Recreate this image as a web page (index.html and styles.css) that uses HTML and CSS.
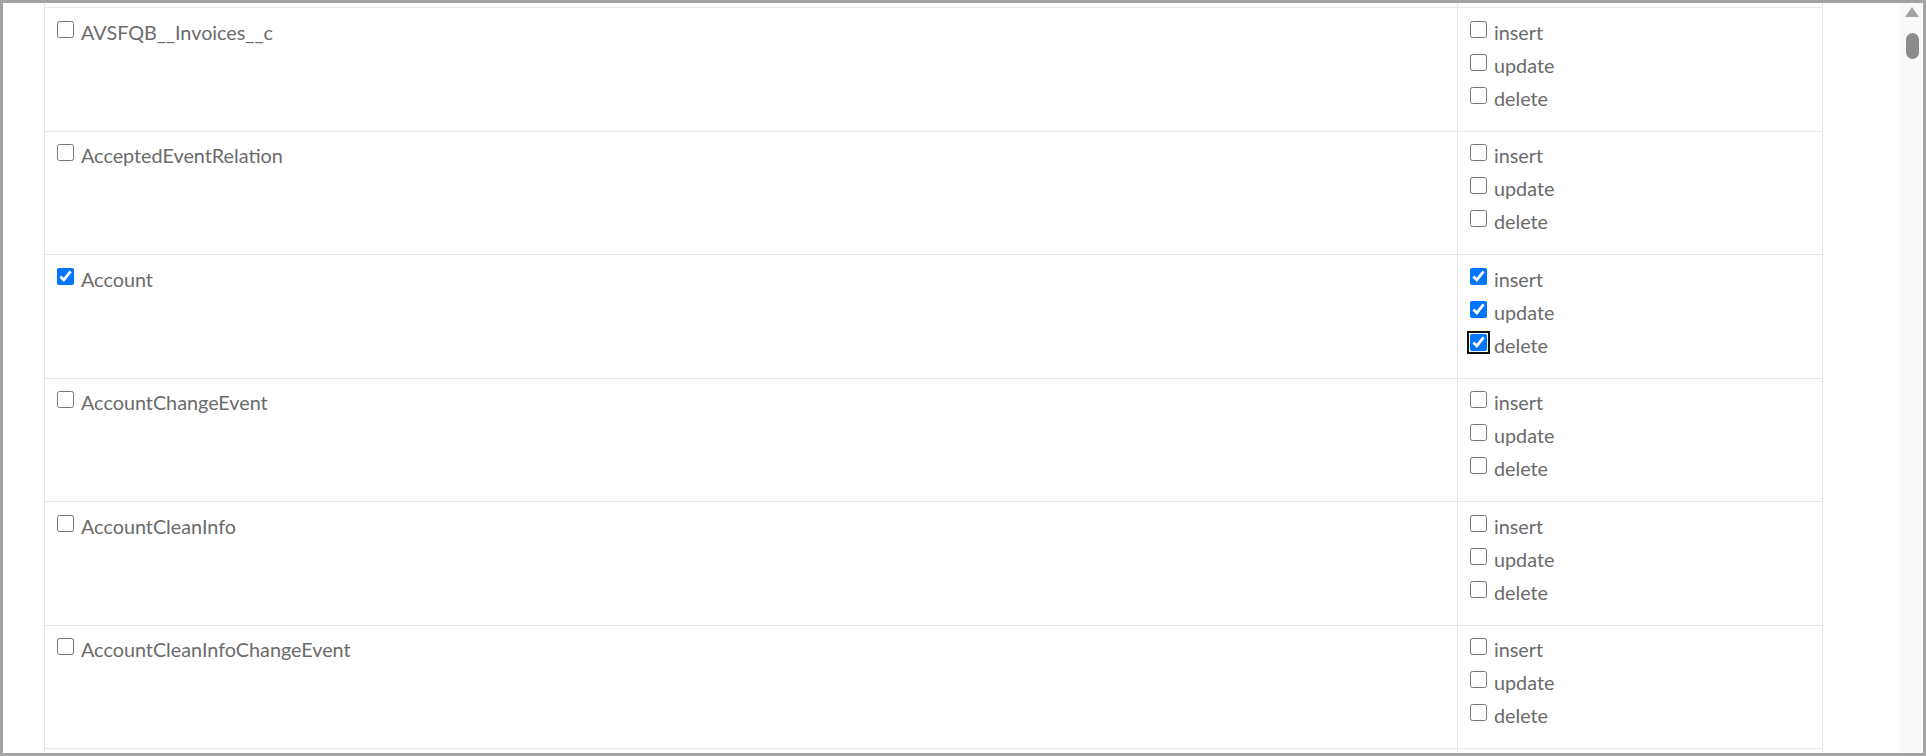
FILE: index.html
```html
<!DOCTYPE html>
<html>
<head>
<meta charset="utf-8">
<link rel="stylesheet" href="styles.css">
</head>
<body>
<div class="frame">
  <div class="viewport">
    <div class="table">
      <div class="cell name stub"></div><div class="cell ops stub"></div>

      <div class="cell name"><label class="opt"><input type="checkbox"><span>AVSFQB__Invoices__c</span></label></div>
      <div class="cell ops">
        <label class="opt"><input type="checkbox"><span>insert</span></label>
        <label class="opt"><input type="checkbox"><span>update</span></label>
        <label class="opt"><input type="checkbox"><span>delete</span></label>
      </div>

      <div class="cell name"><label class="opt"><input type="checkbox"><span>AcceptedEventRelation</span></label></div>
      <div class="cell ops">
        <label class="opt"><input type="checkbox"><span>insert</span></label>
        <label class="opt"><input type="checkbox"><span>update</span></label>
        <label class="opt"><input type="checkbox"><span>delete</span></label>
      </div>

      <div class="cell name"><label class="opt"><input type="checkbox" checked><span>Account</span></label></div>
      <div class="cell ops">
        <label class="opt"><input type="checkbox" checked><span>insert</span></label>
        <label class="opt"><input type="checkbox" checked><span>update</span></label>
        <label class="opt"><input type="checkbox" class="focused" checked><span>delete</span></label>
      </div>

      <div class="cell name"><label class="opt"><input type="checkbox"><span>AccountChangeEvent</span></label></div>
      <div class="cell ops">
        <label class="opt"><input type="checkbox"><span>insert</span></label>
        <label class="opt"><input type="checkbox"><span>update</span></label>
        <label class="opt"><input type="checkbox"><span>delete</span></label>
      </div>

      <div class="cell name"><label class="opt"><input type="checkbox"><span>AccountCleanInfo</span></label></div>
      <div class="cell ops">
        <label class="opt"><input type="checkbox"><span>insert</span></label>
        <label class="opt"><input type="checkbox"><span>update</span></label>
        <label class="opt"><input type="checkbox"><span>delete</span></label>
      </div>

      <div class="cell name"><label class="opt"><input type="checkbox"><span>AccountCleanInfoChangeEvent</span></label></div>
      <div class="cell ops">
        <label class="opt"><input type="checkbox"><span>insert</span></label>
        <label class="opt"><input type="checkbox"><span>update</span></label>
        <label class="opt"><input type="checkbox"><span>delete</span></label>
      </div>

      <div class="cell name"></div>
      <div class="cell ops"></div>
    </div>
  </div>
  <div class="scrollbar">
    <svg class="arrow" width="14" height="10" viewBox="0 0 14 10"><polygon points="7,0 14,10 0,10" fill="#a3a3a3"/></svg>
    <div class="thumb"></div>
  </div>
</div>
</body>
</html>
```

FILE: styles.css
```css
html, body {
  margin: 0;
  padding: 0;
  background: #ffffff;
}

.frame {
  width: 1926px;
  height: 756px;
  box-sizing: border-box;
  border: 3px solid #a3a3a3;
  display: flex;
  overflow: hidden;
  font-family: Lato, "Open Sans", sans-serif;
  font-size: 19.8px;
  color: #6b6b6b;
}

.viewport {
  flex: 1;
  overflow: hidden;
  padding-left: 41px;
}

.table {
  width: 1779px;
  display: grid;
  grid-template-columns: 1413px 366px;
  grid-template-rows: 4px;
  grid-auto-rows: 123.5px;
}

.cell {
  box-sizing: border-box;
  border-top: 1px solid #e4e7ea;
  border-left: 1px solid #e4e7ea;
  padding: 12.7px 0 0 12px;
}

.cell.ops {
  border-right: 1px solid #e4e7ea;
}

.cell.stub {
  height: 4px;
  border-top: none;
  padding: 0;
}

.opt {
  display: flex;
  align-items: flex-start;
  gap: 7px;
  height: 33px;
  line-height: 23.5px;
  white-space: nowrap;
}

.opt input {
  width: 17px;
  height: 17px;
  margin: 0;
  flex: none;
  accent-color: #0075ff;
}

.opt input.focused {
  outline: 2.7px solid #111111;
  outline-offset: 1.2px;
  border-radius: 3px;
}

.scrollbar {
  width: 23px;
  flex: none;
  background: #fafafa;
  display: flex;
  flex-direction: column;
  align-items: center;
}

.arrow {
  margin-top: 4px;
  margin-left: 1px;
  display: block;
}

.thumb {
  margin-top: 16px;
  margin-left: 1px;
  width: 13px;
  height: 26px;
  border-radius: 6.5px;
  background: #8c8c8c;
}
```
